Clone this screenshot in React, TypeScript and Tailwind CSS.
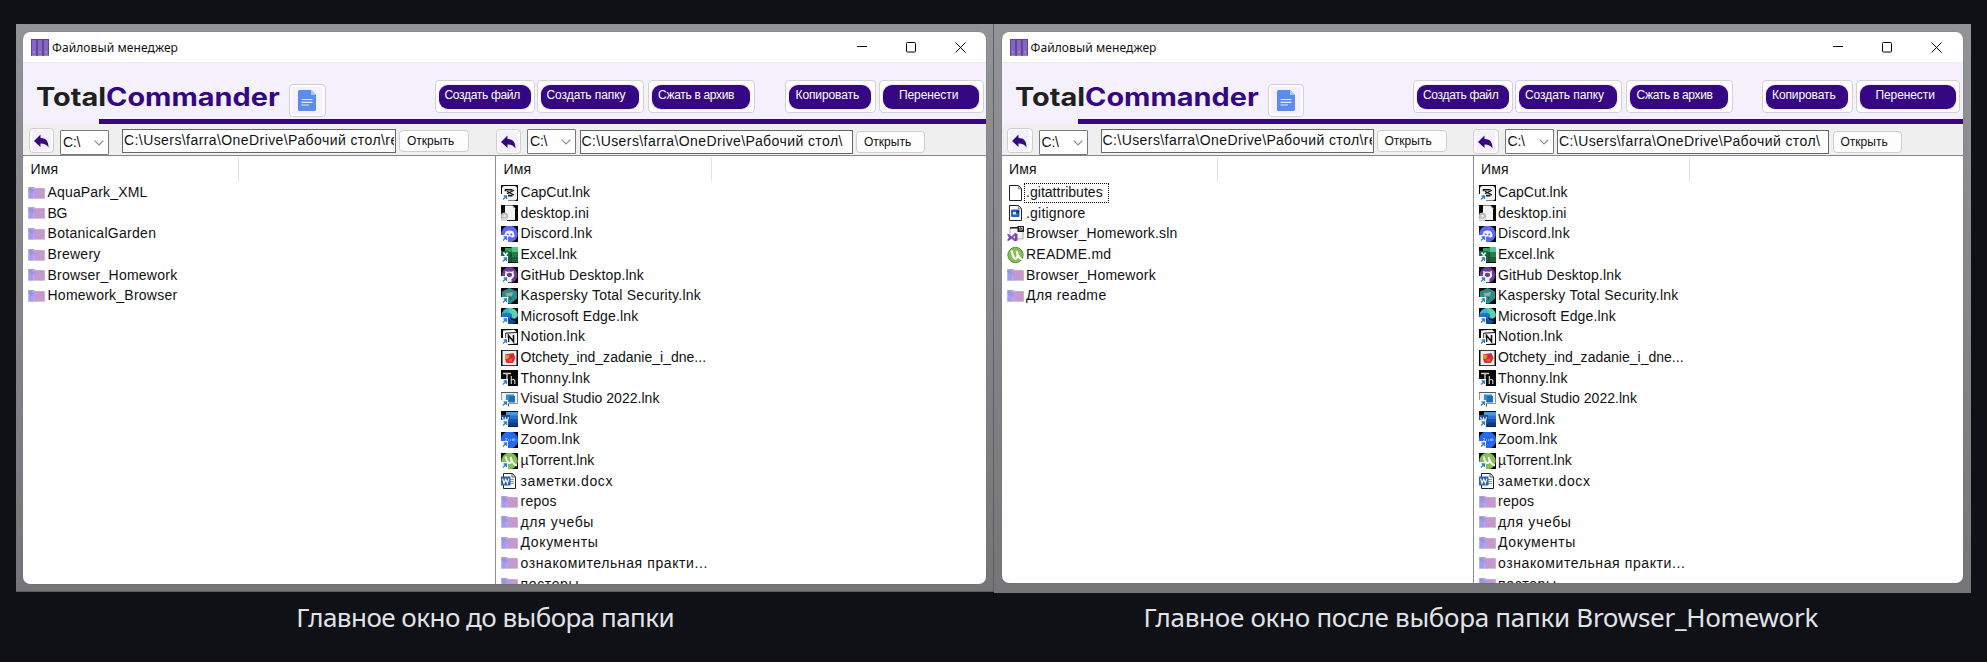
import type { ReactNode } from "react";

type Item = { name: string; icon: string; focused?: boolean; tracking?: string };

const LAT = "tracking-[0.24px]";
const TIGHT = "tracking-[0.03px]";
const CYR = "tracking-[0.64px]";

function Shortcut() {
  return (
    <>
      <rect x="0" y="9" width="7" height="7" fill="#fff" />
      <path d="M2 14.5 5 11.5M2.6 11h2.9v2.9" stroke="#2f7fc4" strokeWidth="1.3" fill="none" />
    </>
  );
}

function Black({ children }: { children: ReactNode }) {
  return (
    <>
      <rect width="17" height="16" fill="#080808" />
      {children}
      <Shortcut />
    </>
  );
}

const art: Record<string, ReactNode> = {
  folder: (
    <>
      <path d="M0 2h6l1.5 1.5H17V14H0z" fill="#cfc6d8" />
      <rect x="5.5" y="3.2" width="11" height="9.8" fill="#c599cb" />
      <path d="M.6 2.4h6v10.8h-6z" fill="#a19cf6" />
      <path d="M.6 2.4h4.6l1.4 1.4L3.6 8 .6 5.5z" fill="#9c96cf" />
      <path d="M4.6 2h2v2.4h-2zM5 8.5h1.6v4.6H5z" fill="#c4a2f8" />
    </>
  ),
  capcut: (
    <Black>
      <rect x="1" y="1" width="15" height="14.5" rx="2.5" fill="#f4f4f4" />
      <path d="M13 5.2 6 8.8M13 10 6 6.4" stroke="#151515" strokeWidth="1.2" />
      <path d="M4.500 6.200V4.700h7M4.500 9v1.600h7" stroke="#151515" strokeWidth="1.600" fill="none" />
    </Black>
  ),
  ini: (
    <>
      <rect width="17" height="16" fill="#080808" />
      <path d="M4 .5h7.500L14 3.200V15H4z" fill="#f3f3f3" />
      <path d="M11.500.5v2.700H14" fill="#cfcfcf" />
      <circle cx="3.500" cy="11" r="3.600" fill="#bdbdbd" />
      <circle cx="3.500" cy="11" r="1.300" fill="#eee" />
      <path d="M0 13h6v3H0z" fill="#d6d6d6" />
    </>
  ),
  discord: (
    <Black>
      <circle cx="8.5" cy="8" r="8.3" fill="#5d68f0" />
      <path d="M5 5.200c2-1 5-1 7 0 1 1.600 1.600 3.500 1.500 5.300-1 .8-1.800 1.100-2.600 1.200l-.7-1.200H6.800l-.7 1.200c-.9-.1-1.700-.5-2.600-1.200C3.400 8.700 4 6.800 5 5.200z" fill="#f3f4ff" />
      <circle cx="6.700" cy="8.500" r="1.100" fill="#5d68f0" />
      <circle cx="10.300" cy="8.500" r="1.100" fill="#5d68f0" />
    </Black>
  ),
  excel: (
    <Black>
      <rect x="4" y="1" width="6.500" height="5" fill="#2ea06b" />
      <rect x="10.500" y="0" width="6.500" height="5" fill="#4cc78e" />
      <rect x="10.500" y="5" width="6.500" height="5" fill="#277a4c" />
      <rect x="4" y="5" width="6.500" height="10" fill="#1c5836" />
      <rect x="10.500" y="10" width="6.500" height="5" fill="#205f3d" />
      <rect x="0" y="4" width="8.500" height="9" fill="#1a6b41" />
      <path d="m2.500 5.500 4 5.500m0-5.500L3 11" stroke="#eef7f1" strokeWidth="1.500" />
    </Black>
  ),
  github: (
    <Black>
      <circle cx="8.500" cy="8" r="7.900" fill="#6c3a99" />
      <path d="M6.600 15v-3.200C3.800 10.700 3.300 8.200 4.300 6.200l-.1-2.400 2.300.9a8 8 0 0 1 4 0l2.300-.9-.1 2.400c1 2 .5 4.500-2.200 5.600V15z" fill="#f4eef8" />
      <ellipse cx="8.500" cy="7.900" rx="2.700" ry="2.100" fill="#6c3a99" />
    </Black>
  ),
  kaspersky: (
    <Black>
      <path d="M8.500 0 16 3.500v7L9 16 1 11.500V3.500z" fill="#2b8c8d" />
      <path d="M4.500 5.500 12 4l-1.500 7-4-1z" fill="#79b8ac" />
      <path d="m5 6 6-1.500-3 3z" fill="#d9995c" />
      <path d="M7 8.500h4l-1 4z" fill="#1b5d6c" />
    </Black>
  ),
  edge: (
    <Black>
      <circle cx="8.500" cy="8" r="8.200" fill="#1779c8" />
      <path d="M1 6C2.500 1 7 0 9.500 0c5 .3 7.500 4 7.200 7.300-.4 3-4.300 3.500-6 2 1.300-2.800-.9-4.800-3.700-4.800C4 4.500 2 5 1 6z" fill="#5fd0a5" />
      <path d="M1 6C2.500 2 5.500.5 8 .3L9 4.800C5.500 3.500 2.500 4.500 1 6z" fill="#35b5df" />
      <path d="M7.500 7c-1 3.500 1.500 6.500 6.500 5.800l2-1.300c-1.500 3-4 4.500-7 4.500-4-1.500-4.500-6.500-1.500-9z" fill="#11498c" />
      <path d="M9 7.500c-.3 2.500 2.500 4 5.500 3.200l2.500-2V12c-3 2-8.500 1-8-4.500z" fill="#0b0b0b" />
    </Black>
  ),
  notion: (
    <Black>
      <path d="M2 1.500 13 .8l3 2.400v11.300L5 15.300 2 12.500z" fill="#f7f7f7" />
      <path d="M4.500 4.200 16 3.500" stroke="#111" />
      <path d="M4.600 4v11" stroke="#111" strokeWidth=".8" />
      <path d="M7.500 13V6.500l5 6V6" stroke="#111" strokeWidth="1.600" fill="none" />
    </Black>
  ),
  pdf: (
    <>
      <rect width="17" height="16" fill="#0b0b0b" />
      <rect x="1.500" y=".8" width="14" height="14.400" fill="#e9edf0" />
      <path d="m4 4.500 8.500-1.500 2 5-2.500 5H5.500L4 9z" fill="#d8342b" />
      <path d="m4 4.500 4.500 1-1.500 3.500L4 9z" fill="#e98b3a" />
      <path d="m9 4.500 4 1-3 3z" fill="#b92564" />
      <path d="m7 10 4-1-.500 3z" fill="#f06a3b" />
    </>
  ),
  thonny: (
    <Black>
      <path d="M2 3.500h8M6 3.500v8" stroke="#cfcfcf" strokeWidth="1.400" />
      <path d="M10.300 6v8M10.300 10.500c1-1.400 3.500-1.400 3.500.5v3" stroke="#c8c8c8" strokeWidth="1.200" fill="none" />
    </Black>
  ),
  vs: (
    <>
      <rect x=".5" y="1.500" width="16" height="11" fill="#eef2f5" stroke="#8f989f" />
      <path d="M0 1.500h17" stroke="#4f5960" />
      <rect x="5" y="3.500" width="8" height="7.500" fill="#2d8fd3" />
      <rect x="8" y="5" width="6" height="6.500" fill="#1f6fb5" />
      <path d="M7.500 13v2.500" stroke="#555" />
      <Shortcut />
    </>
  ),
  word: (
    <Black>
      <rect x="5" y="1" width="12" height="4" fill="#3f9be8" />
      <rect x="5" y="4.500" width="12" height="4" fill="#2c71cf" />
      <rect x="5" y="8" width="12" height="4" fill="#1b52b0" />
      <rect x="5" y="11.500" width="12" height="4" fill="#123b84" />
      <rect x="0" y="4" width="9" height="9" fill="#1b4ea6" />
      <path d="m1.500 6 1.400 5 1.600-4 1.600 4 1.400-5" stroke="#dfe9f8" strokeWidth="1.200" fill="none" />
    </Black>
  ),
  zoom: (
    <Black>
      <circle cx="8.500" cy="8" r="8.600" fill="#2568f2" />
      <path d="M4 6.500h2L4.300 9H6M7.500 7v2M9.500 7v2M11.500 9V7h1v2m0-2h1.300v2" stroke="#9cbcff" strokeWidth=".8" fill="none" />
    </Black>
  ),
  utorrent: (
    <Black>
      <circle cx="8.500" cy="8" r="8.200" fill="#83bf55" />
      <path d="M4.500 3.500c1.500 5 3 7 4.500 6.500 2-.6 1.500-3.500.5-6 1.500 5 3.500 8 6.500 8.500" stroke="#f5faf0" strokeWidth="2" fill="none" />
    </Black>
  ),
  utorrentFull: (
    <>
      <circle cx="8.500" cy="8" r="7.700" fill="#83bf55" stroke="#4c7a33" strokeWidth=".8" />
      <path d="M4.500 3.500c1.500 6 2.500 8.500 4.500 8 2-.6 1.800-4 .7-7.500C11 9 12.500 12 15 12.300" stroke="#f8fbf4" strokeWidth="2.200" fill="none" />
    </>
  ),
  docx: (
    <>
      <path d="M2.500.5h9L14.500 4v11.500h-12z" fill="#fff" stroke="#222" />
      <path d="M11 .5V4h3.500" stroke="#555" fill="none" />
      <path d="M9 6.500h4M9 8.500h4M9 10.500h4" stroke="#6f97d6" />
      <rect x="0" y="3.500" width="9.500" height="9" fill="#2d5fb4" />
      <path d="m1.600 5.700 1.400 4.600 1.700-4 1.700 4 1.400-4.600" stroke="#fff" strokeWidth="1.200" fill="none" />
    </>
  ),
  file: (
    <>
      <path d="M2.500.5h9L14.500 3.500v12h-12z" fill="#fff" stroke="#222" strokeWidth="1" />
      <path d="M11.300.5v3.200h3.200" stroke="#777" fill="none" />
    </>
  ),
  gitignore: (
    <>
      <path d="M2.500.5h9L14.500 3.500v12h-12z" fill="#fff" stroke="#222" strokeWidth="1" />
      <path d="M11.300.5v3.200h3.200" stroke="#777" fill="none" />
      <rect x="4" y="4.500" width="8.500" height="7.500" rx="1" fill="#2767c4" />
      <rect x="6" y="7" width="3.500" height="2.500" fill="#d8e6f8" />
      <path d="M9 5.500h3v3H9z" fill="#153f8c" />
    </>
  ),
  sln: (
    <>
      <rect x="3" y="2" width="13" height="11" fill="#f6f6f6" stroke="#8e8e8e" strokeWidth=".7" />
      <path d="M3 1.800h9" stroke="#222" strokeWidth="1.500" />
      <rect x="10.500" y="-.5" width="6.500" height="6.500" fill="#1e1e1e" />
      <path d="M12 1.500h1v3M14 1.500h1.600l-1 3" stroke="#fff" strokeWidth=".8" fill="none" />
      <path d="M0 8.500 1.500 8l3 2.500L8 7l2.500 1v6.500L8 15.500 4.500 12.500 1.500 15 0 14.300l2-2.800z" fill="#7a45b8" />
      <path d="M8 9.800v3L6 11.300z" fill="#f3ecfb" />
    </>
  ),
};

function FileIcon({ kind }: { kind: string }) {
  return (
    <svg viewBox="0 0 17 16" className="h-4 w-[17px] shrink-0 overflow-hidden">
      {art[kind]}
    </svg>
  );
}

const folder = (name: string, tracking = LAT): Item => ({ name, icon: "folder", tracking });

const reposItems: Item[] = [
  folder("AquaPark_XML", "tracking-[0.16px]"),
  folder("BG", "tracking-[-0.3px]"),
  folder("BotanicalGarden", "tracking-[0.3px]"),
  folder("Brewery"),
  folder("Browser_Homework"),
  folder("Homework_Browser"),
];

const projectItems: Item[] = [
  { name: ".gitattributes", icon: "file", focused: true, tracking: TIGHT },
  { name: ".gitignore", icon: "gitignore", tracking: "tracking-[0.2px]" },
  { name: "Browser_Homework.sln", icon: "sln", tracking: "tracking-[0.18px]" },
  { name: "README.md", icon: "utorrentFull" },
  folder("Browser_Homework"),
  folder("Для readme", "tracking-[0.4px]"),
];

const desktopItems: Item[] = [
  { name: "CapCut.lnk", icon: "capcut", tracking: TIGHT },
  { name: "desktop.ini", icon: "ini", tracking: "tracking-[0.15px]" },
  { name: "Discord.lnk", icon: "discord" },
  { name: "Excel.lnk", icon: "excel", tracking: TIGHT },
  { name: "GitHub Desktop.lnk", icon: "github", tracking: "tracking-[0.15px]" },
  { name: "Kaspersky Total Security.lnk", icon: "kaspersky" },
  { name: "Microsoft Edge.lnk", icon: "edge", tracking: "tracking-[0.15px]" },
  { name: "Notion.lnk", icon: "notion" },
  { name: "Otchety_ind_zadanie_i_dne...", icon: "pdf", tracking: "tracking-[0.01px]" },
  { name: "Thonny.lnk", icon: "thonny" },
  { name: "Visual Studio 2022.lnk", icon: "vs", tracking: TIGHT },
  { name: "Word.lnk", icon: "word" },
  { name: "Zoom.lnk", icon: "zoom" },
  { name: "µTorrent.lnk", icon: "utorrent", tracking: TIGHT },
  { name: "заметки.docx", icon: "docx", tracking: CYR },
  folder("repos"),
  folder("для учебы", CYR),
  folder("Документы", CYR),
  folder("ознакомительная практи...", "tracking-[0.6px]"),
  folder("постеры", CYR),
];

function FileList({ items, className }: { items: Item[]; className: string }) {
  return (
    <div className={`min-h-0 overflow-hidden pl-[5px] ${className}`}>
      <div className="flex h-[26.500px] items-start">
        <div className="mt-px flex h-[25px] w-[211px] items-center border-r border-[#e2e2e2] pl-[2.500px]">
          <span className="tracking-[0.2px]">Имя</span>
        </div>
      </div>
      {items.map((item, i) => (
        <div key={i} className="flex h-[20.6px] items-center">
          <FileIcon kind={item.icon} />
          <span
            className={`flex h-5 items-center border border-dotted pl-[1.500px] whitespace-nowrap ${
              item.focused ? "border-black pr-[5px]" : "border-transparent"
            } ${item.tracking ?? LAT}`}
          >
            {item.name}
          </span>
        </div>
      ))}
    </div>
  );
}

function PillButton({ label, width, pill, text }: { label: string; width: string; pill: string; text: string }) {
  return (
    <button className={`flex h-[33px] shrink-0 rounded-[4px] border border-[#d3d0d6] bg-[#fdfcff] pt-1 pl-[3px] ${width}`}>
      <span className={`flex h-6 rounded-[9px] bg-[#360783] shadow-[0_0_0_1px_#efe9f8] ${pill}`}>
        <span className={`pt-[3px] text-[12px] leading-[15px] whitespace-nowrap text-white ${text}`}>{label}</span>
      </span>
    </button>
  );
}

function BackButton() {
  return (
    <button className="flex h-[25px] w-[25.500px] shrink-0 items-center justify-center rounded-[4px] border border-[#cfcfcf] bg-[#fdfdfd]">
      <span className="flex h-[21px] w-[19px] items-center justify-center bg-[#f4f0fc]">
        <svg viewBox="0 0 15 14" className="h-[14px] w-[15px]">
          <path d="M0 7 6.500.5V4C12 4 14.500 7 14.500 13.500 12.500 10.500 10.500 9.500 6.500 9.500V13z" fill="#360783" />
        </svg>
      </span>
    </button>
  );
}

function DriveSelect({ className }: { className: string }) {
  return (
    <div className={`flex h-[25px] w-[49px] shrink-0 items-center justify-between rounded-[1px] border border-[#7a7a7a] bg-white pr-1 pl-[2px] text-[14px] ${className}`}>
      <span className="tracking-[-0.2px]">C:\</span>
      <svg viewBox="0 0 10 6" className="h-[6px] w-[10px]">
        <path d="m.7.7 4.300 4.300L9.300.7" fill="none" stroke="#8b8b8b" strokeWidth="1.200" />
      </svg>
    </div>
  );
}

function PathField({ value, className }: { value: string; className: string }) {
  return (
    <div className={`flex h-6 shrink-0 items-start border border-[#666] bg-white pt-[2px] pr-px pl-px text-[14px] leading-[17px] tracking-[0.42px] whitespace-nowrap ${className}`}>
      <span className="w-full overflow-hidden">{value}</span>
    </div>
  );
}

function OpenButton({ className }: { className: string }) {
  return (
    <button className={`flex h-[22px] shrink-0 items-center rounded-[4px] border border-[#cfcfcf] bg-[#fdfdfd] pl-[7px] text-[12px] ${className}`}>
      Открыть
    </button>
  );
}

type ManagerProps = {
  items: Item[];
  className: string;
  bodyClass: string;
  leftPath: string;
  rightPath: string;
};

function FileManager({ items, className, bodyClass, leftPath, rightPath }: ManagerProps) {
  return (
    <section
      className={`flex shrink-0 flex-col overflow-hidden rounded-[7px] bg-white font-['Liberation_Sans',Arial,sans-serif] text-[14px] leading-[17px] text-[#111] shadow-[0_0_1px_#555] ${className}`}
    >
      <div className="flex h-[31px] shrink-0 items-center border-b border-[#ebe9ef] pl-2">
        <svg viewBox="0 0 18 17" className="h-[17px] w-[18px]">
          <g fill="#8668bb" stroke="#5c36a6" strokeWidth=".9">
            <rect x=".5" y=".5" width="5" height="16" />
            <rect x="6.500" y=".5" width="5" height="16" />
            <rect x="12.500" y=".5" width="5" height="16" />
          </g>
          <path d="M2.500 13h1M8.500 13h1M14.500 13h1" stroke="#e6ddf4" />
          <path d="M1 16.300h4M7 16.300h4M13 16.300h4" stroke="#b9a5dc" strokeWidth=".8" />
        </svg>
        <span className="ml-[3px] font-['Noto_Sans',sans-serif] text-[12px] tracking-[0.1px]">Файловый менеджер</span>
        <div className="mr-[20.500px] ml-auto flex items-center text-black">
          <svg viewBox="0 0 10 11" className="mr-[39px] h-[11px] w-[10px]">
            <path d="M0 4.500h10" stroke="currentColor" />
          </svg>
          <svg viewBox="0 0 10 11" className="mr-[39px] h-[11px] w-[10px]">
            <rect x=".5" y=".5" width="9" height="9.500" rx="1" fill="none" stroke="currentColor" />
          </svg>
          <svg viewBox="0 0 11 11" className="h-[11px] w-[11px]">
            <path d="m.5.5 10 10m0-10-10 10" stroke="currentColor" />
          </svg>
        </div>
      </div>

      <header className="flex h-[56px] shrink-0 items-start bg-[#f4f0fc] pr-[2.500px]">
        <div className="w-[266px] shrink-0 pt-[18px] pl-[13px]">
          <h1 className="w-max origin-left scale-x-[1.155] font-['Inter',sans-serif] text-[25px] leading-[32px] font-bold text-[#202020]">
            Total<span className="text-[#360783]">Commander</span>
          </h1>
        </div>
        <button className="mt-[21px] flex h-[33px] w-[36.500px] shrink-0 items-center justify-center rounded-[4px] border border-[#d3d0d6] bg-[#fdfcff]">
          <span className="flex h-[27px] w-[30px] items-center justify-center bg-[#f4f0fc]">
            <svg viewBox="0 0 18 21" className="h-[21px] w-[18px]">
              <path d="M1.500 0H13l5 5v14.500q0 1.500-1.500 1.500h-15Q0 21 0 19.500v-18Q0 0 1.500 0z" fill="#5c8ced" />
              <path d="M13 0v5h5z" fill="#a9c4f7" />
              <path d="M3.500 9.500h11M3.500 12.300h11M3.500 15h7.500" stroke="#dfe9fd" strokeWidth="1.200" />
            </svg>
          </span>
        </button>
        <div className="mt-[17px] ml-[109px] flex gap-[2px]">
          <PillButton label="Создать файл" width="w-[100px]" pill="w-[92px]" text="pl-[6px] tracking-[-0.32px]" />
          <PillButton label="Создать папку" width="w-[107px]" pill="w-[98px]" text="pl-[6px] tracking-[-0.08px]" />
          <PillButton label="Сжать в архив" width="ml-[2px] w-[107px]" pill="w-[98px]" text="pl-[6.500px] tracking-[-0.34px]" />
        </div>
        <div className="mt-[17px] ml-auto flex gap-[3px]">
          <PillButton label="Копировать" width="w-[91px]" pill="w-[82px]" text="pl-[6.500px] tracking-[-0.1px]" />
          <PillButton label="Перенести" width="w-[104.500px]" pill="w-[96px]" text="pl-[16px] tracking-[-0.1px]" />
        </div>
      </header>
      <div className="h-[5px] shrink-0 bg-[#f4f0fc] pl-[76px]">
        <div className="h-full bg-[#360783]" />
      </div>

      <div className="flex h-[32px] shrink-0 items-start border-b border-[#85858f] bg-[#efefef] pl-[5.500px]">
        <div className="mt-1">
          <BackButton />
        </div>
        <DriveSelect className="mt-[6px] ml-[6px]" />
        <PathField className={`mt-[5px] ml-[13px] ${leftPath}`} value="C:\Users\farra\OneDrive\Рабочий стол\re" />
        <OpenButton className="mt-[6px] ml-[3px] w-[70px]" />
        <div className="mt-[5px] ml-[26.500px]">
          <BackButton />
        </div>
        <DriveSelect className="mt-[5px] ml-[6px]" />
        <PathField className={`mt-[6px] ml-[3.500px] ${rightPath}`} value="C:\Users\farra\OneDrive\Рабочий стол\" />
        <OpenButton className="mt-[7px] ml-[3.500px] w-[69px]" />
      </div>

      <div className={`grid min-h-0 flex-1 ${bodyClass}`}>
        <FileList items={items} className="" />
        <FileList items={desktopItems} className="border-l border-[#8d8d98]" />
      </div>
    </section>
  );
}

export default function App() {
  return (
    <main className="flex h-[662px] w-[1987px] items-start overflow-hidden bg-[#101116] pt-6 pl-4">
      <figure className="w-[977.500px] shrink-0">
        <div className="h-[567.500px] border-r border-b border-[#5f5f62] bg-linear-to-b from-[#929397] via-[#868589] to-[#757577] pt-2 pl-[7px]">
          <FileManager
            items={reposItems}
            className="h-[552px] w-[963px]"
            bodyClass="grid-cols-[472px_1fr]"
            leftPath="w-[274px]"
            rightPath="w-[273px]"
          />
        </div>
        <figcaption className="flex h-[52px] items-center justify-center pr-[39px] font-['Noto_Sans',sans-serif] text-[26px] tracking-[-0.54px] whitespace-nowrap text-[#e0e3e8]">
          Главное окно до выбора папки
        </figcaption>
      </figure>
      <figure className="w-[977.500px] shrink-0">
        <div className="h-[568.500px] bg-linear-to-b from-[#929397] via-[#868589] to-[#757577] pt-2 pl-[8px]">
          <FileManager
            items={projectItems}
            className="h-[551px] w-[961px]"
            bodyClass="grid-cols-[471px_1fr]"
            leftPath="w-[273px]"
            rightPath="w-[272px]"
          />
        </div>
        <figcaption className="flex h-[50px] items-center justify-center pr-[3px] font-['Noto_Sans',sans-serif] text-[26px] tracking-[-0.29px] whitespace-nowrap text-[#e0e3e8]">
          Главное окно после выбора папки Browser_Homework
        </figcaption>
      </figure>
    </main>
  );
}
